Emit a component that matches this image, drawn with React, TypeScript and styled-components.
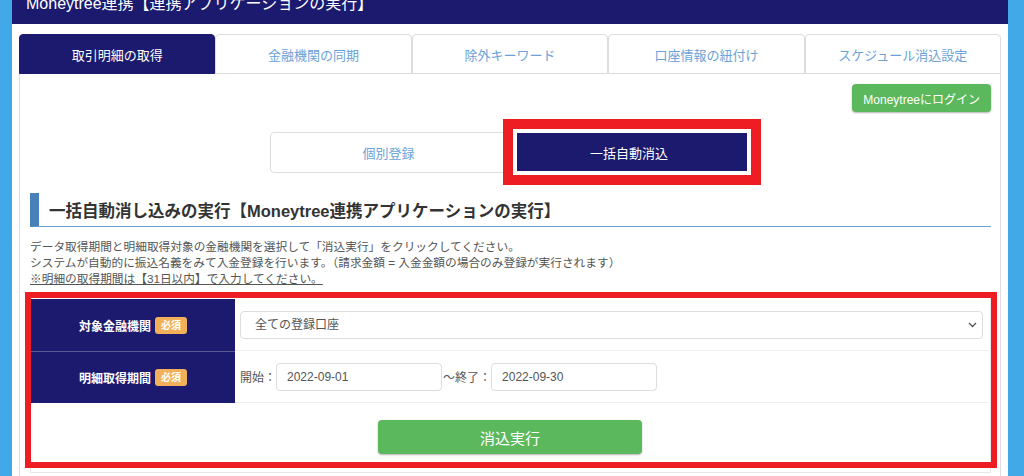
import React from "react";
import styled, { createGlobalStyle } from "styled-components";

const GlobalStyle = createGlobalStyle`
  html, body {
    margin: 0;
    padding: 0;
    background: #42a9e9;
  }
  body {
    font-family: "Liberation Sans", "Noto Sans CJK JP", sans-serif;
  }
  * {
    box-sizing: border-box;
  }
`;

const NAVY = "#1b1a6e";
const LINK = "#6aa2d9";
const ANNOT = "#ee1d24";

const Page = styled.div`
  width: 996px;
  margin-left: 12px;
  min-height: 476px;
  background: #fff;
  overflow: hidden;
`;

const Header = styled.header`
  height: 24px;
  background: ${NAVY};
  display: flex;
  align-items: flex-end;
  padding: 0 0 11px 14px;
`;

const Title = styled.h1`
  margin: 0;
  font-size: 16px;
  line-height: 18px;
  font-weight: normal;
  color: #fff;
  white-space: nowrap;
`;

const Main = styled.main`
  padding: 10px 7px 0 7px;
`;

const TabBar = styled.ul`
  display: flex;
  margin: 0;
  padding: 0;
  list-style: none;
  border-bottom: 1px solid #ddd;
`;

const Tab = styled.li<{ $active?: boolean }>`
  flex: 1;
  height: 40px;
  margin-bottom: -1px;
  display: flex;
  align-items: center;
  justify-content: center;
  font-size: 13px;
  border: 1px solid ${(p) => (p.$active ? NAVY : "#ddd")};
  border-radius: 4px 4px 0 0;
  background: ${(p) => (p.$active ? NAVY : "#fff")};
  color: ${(p) => (p.$active ? "#fff" : LINK)};
`;

const Panel = styled.section`
  border: 1px solid #ddd;
  border-top: none;
  padding: 10px 9px 24px 10px;
`;

const LoginRow = styled.div`
  display: flex;
  justify-content: flex-end;
`;

const GreenButton = styled.button<{ $big?: boolean }>`
  background: #5cb85c;
  color: #fff;
  border: none;
  border-radius: 4px;
  font-family: inherit;
  font-size: ${(p) => (p.$big ? "15px" : "12px")};
  height: ${(p) => (p.$big ? "34px" : "28px")};
  width: ${(p) => (p.$big ? "264px" : "auto")};
  padding: 0 11px;
  box-shadow: 0 1px 2px rgba(0, 0, 0, 0.3);
`;

const ModeSwitch = styled.div`
  display: flex;
  justify-content: center;
  margin-top: 20px;
`;

const ModeButton = styled.div<{ $active?: boolean }>`
  position: relative;
  width: ${(p) => (p.$active ? "244px" : "237px")};
  height: 41px;
  display: flex;
  align-items: center;
  justify-content: center;
  font-size: 13px;
  border: 1px solid ${(p) => (p.$active ? NAVY : "#ddd")};
  border-radius: ${(p) => (p.$active ? "0 4px 4px 0" : "4px 0 0 4px")};
  background: ${(p) => (p.$active ? NAVY : "#fff")};
  color: ${(p) => (p.$active ? "#fff" : LINK)};
`;

// red annotation frames drawn over the screenshot
const Highlight = styled.span<{ $inset: string; $width: number; $gap?: number }>`
  position: absolute;
  inset: ${(p) => p.$inset};
  border: ${(p) => p.$width}px solid ${ANNOT};
  box-shadow: inset 0 0 0 ${(p) => p.$gap ?? 0}px #fff;
  pointer-events: none;
`;

const Heading = styled.h2`
  margin: 20px 0 0;
  height: 34px;
  display: flex;
  align-items: center;
  border-left: 9px solid #4a80b8;
  border-bottom: 1px solid #6f9fd3;
  padding-left: 10px;
  font-size: 16.5px;
  font-weight: bold;
  color: #333;
  white-space: nowrap;
`;

const Notes = styled.div`
  margin-top: 12px;
  font-size: 11.7px;
  line-height: 16px;
  color: #555;
`;

const Note = styled.p<{ $underline?: boolean }>`
  margin: 0;
  text-decoration: ${(p) => (p.$underline ? "underline" : "none")};
`;

const FormBox = styled.div`
  position: relative;
  margin-top: 10px;
  border: 1px solid #e8e8e8;
  padding: 1px 1px 8px 0;
`;

const Row = styled.div`
  display: grid;
  grid-template-columns: 204px 1fr;
  height: 52px;
`;

const LabelCell = styled.div<{ $first?: boolean }>`
  background: ${NAVY};
  border-top: ${(p) => (p.$first ? "none" : "1px solid #5b5a95")};
  display: flex;
  align-items: center;
  justify-content: center;
  gap: 4px;
  color: #fff;
  font-size: 12px;
  font-weight: bold;
`;

const Badge = styled.span`
  background: #f2b05a;
  color: #fff;
  font-size: 10px;
  font-weight: bold;
  border-radius: 3px;
  padding: 0 6px;
  height: 17px;
  line-height: 17px;
`;

const ValueCell = styled.div`
  display: flex;
  align-items: center;
  padding: 0 6px 0 5px;
  border-bottom: 1px solid #eee;
  font-size: 12px;
  color: #555;
`;

const SelectWrap = styled.div`
  position: relative;
  flex: 1;
`;

const Select = styled.select`
  appearance: none;
  width: 100%;
  height: 28px;
  border: 1px solid #ddd;
  border-radius: 4px;
  background: #fff;
  padding: 0 14px;
  font-family: inherit;
  font-size: 12px;
  color: #555;
`;

const Chevron = styled.svg`
  position: absolute;
  right: 6px;
  top: 11px;
  pointer-events: none;
`;

const DateLabel = styled.span`
  white-space: nowrap;
`;

const DateInput = styled.input`
  width: 166px;
  height: 28px;
  border: 1px solid #ddd;
  border-radius: 4px;
  padding: 0 10px;
  font-family: inherit;
  font-size: 12px;
  color: #555;
  margin-right: 1px;
`;

const ActionRow = styled.div`
  display: flex;
  justify-content: center;
  padding: 17px 0 10px;
`;

const tabs = ["取引明細の取得", "金融機関の同期", "除外キーワード", "口座情報の紐付け", "スケジュール消込設定"];

const App: React.FC = () => {
  return (
    <>
      <GlobalStyle />
      <Page>
        <Header>
          <Title>Moneytree連携【連携アプリケーションの実行】</Title>
        </Header>
        <Main>
          <TabBar>
            {tabs.map((t, i) => (
              <Tab key={t} $active={i === 0}>
                {t}
              </Tab>
            ))}
          </TabBar>
          <Panel>
            <LoginRow>
              <GreenButton>Moneytreeにログイン</GreenButton>
            </LoginRow>
            <ModeSwitch>
              <ModeButton>個別登録</ModeButton>
              <ModeButton $active>
                一括自動消込
                <Highlight $inset="-14px -11px -13px -5px" $width={10} $gap={4} />
              </ModeButton>
            </ModeSwitch>
            <Heading>一括自動消し込みの実行【Moneytree連携アプリケーションの実行】</Heading>
            <Notes>
              <Note>データ取得期間と明細取得対象の金融機関を選択して「消込実行」をクリックしてください。</Note>
              <Note>システムが自動的に振込名義をみて入金登録を行います。（請求金額 = 入金金額の場合のみ登録が実行されます）</Note>
              <Note $underline>※明細の取得期間は【31日以内】で入力してください。</Note>
            </Notes>
            <FormBox>
              <Row>
                <LabelCell $first>
                  対象金融機関<Badge>必須</Badge>
                </LabelCell>
                <ValueCell>
                  <SelectWrap>
                    <Select defaultValue="all">
                      <option value="all">全ての登録口座</option>
                    </Select>
                    <Chevron width="9" height="6" viewBox="0 0 9 6">
                      <path d="M1 1l3.5 3.5L8 1" fill="none" stroke="#555" strokeWidth="1.3" />
                    </Chevron>
                  </SelectWrap>
                </ValueCell>
              </Row>
              <Row>
                <LabelCell>
                  明細取得期間<Badge>必須</Badge>
                </LabelCell>
                <ValueCell>
                  <DateLabel>開始：</DateLabel>
                  <DateInput defaultValue="2022-09-01" />
                  <DateLabel>～終了：</DateLabel>
                  <DateInput defaultValue="2022-09-30" />
                </ValueCell>
              </Row>
              <ActionRow>
                <GreenButton $big>消込実行</GreenButton>
              </ActionRow>
              <Highlight $inset="-6px -7px 4px -6px" $width={6} />
            </FormBox>
          </Panel>
        </Main>
      </Page>
    </>
  );
};

export default App;
